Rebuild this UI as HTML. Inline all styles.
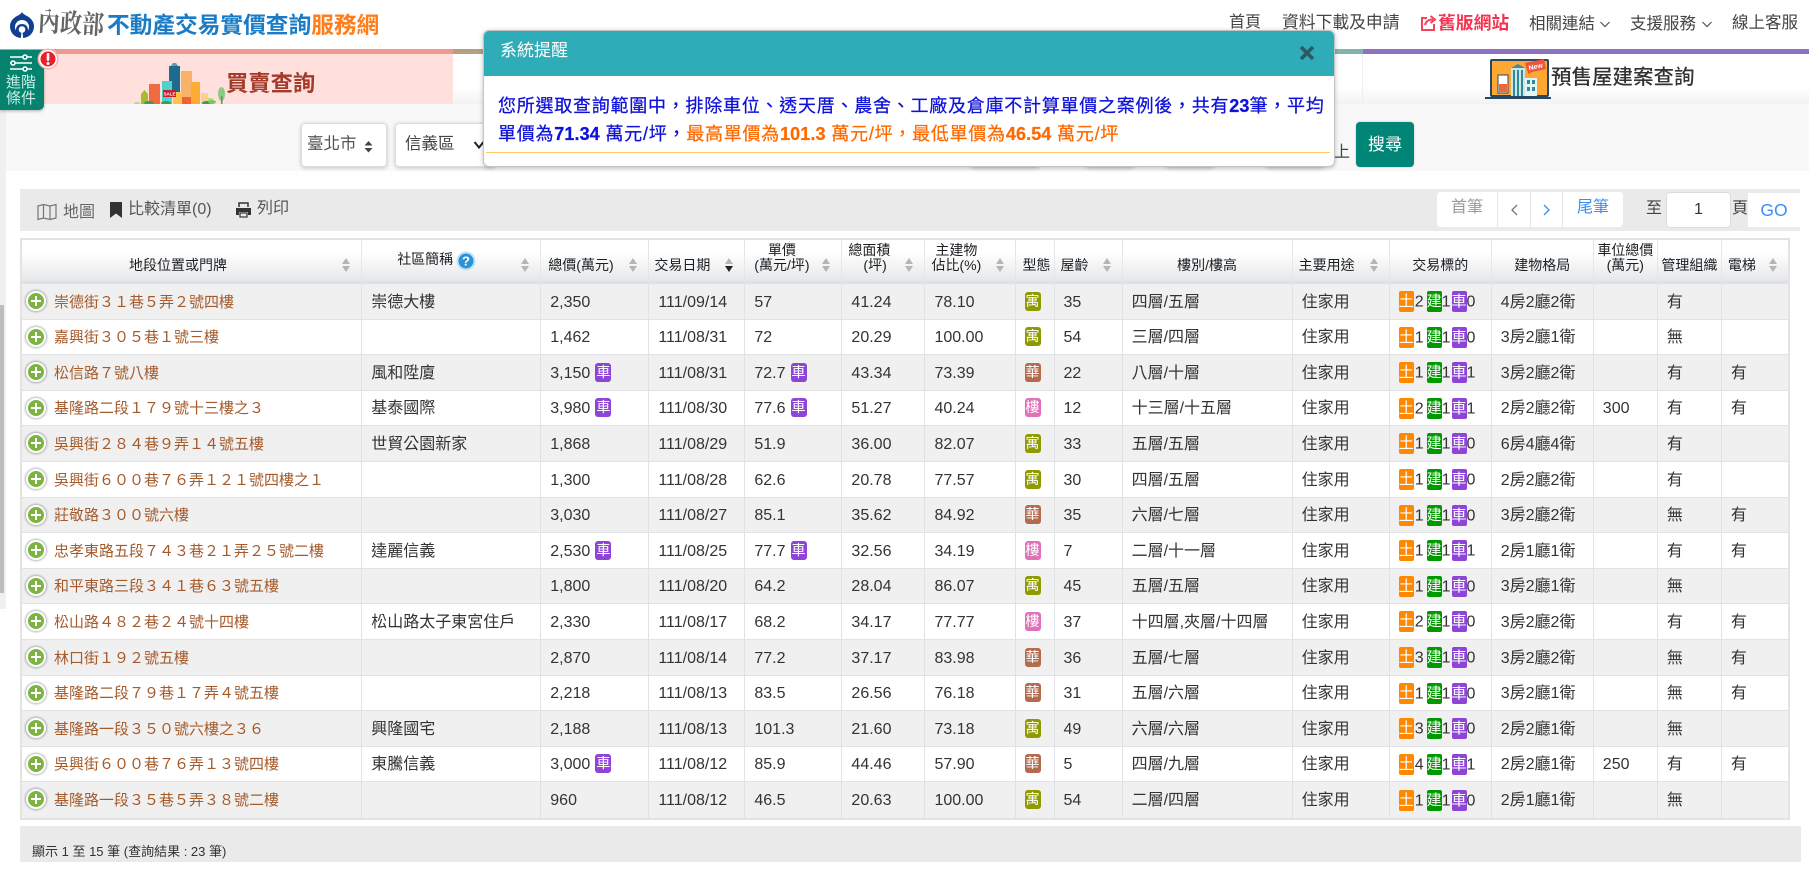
<!DOCTYPE html>
<html lang="zh-Hant">
<head>
<meta charset="utf-8">
<title>不動產交易實價查詢服務網</title>
<style>
html,body{margin:0;padding:0;width:1809px;height:872px;overflow:hidden;background:#fff}
body{position:relative;font-family:"Liberation Sans","Noto Sans CJK TC",sans-serif;font-size:16px;color:#333}
.a{position:absolute;white-space:nowrap}
.box{position:absolute;background:#fff;border:1px solid #ddd;border-radius:4px;box-shadow:0 1px 4px rgba(0,0,0,.22);box-sizing:border-box}
table{position:absolute;left:20px;top:238px;width:1770px;table-layout:fixed;border-collapse:separate;border-spacing:0;border:2px solid #e3e3e3;box-sizing:border-box;background:#fff}
thead tr{height:44px}
th{height:44px;padding:0 0 8px 0;border-right:1px solid #e4e6ea;border-bottom:3px solid #dee2e6;background:linear-gradient(#fff 30%,#e6e7e9);font-weight:normal;font-size:14px;line-height:15px;color:#1c1f22;vertical-align:bottom;position:relative;white-space:nowrap;box-sizing:border-box;text-align:left}
th:last-child,td:last-child{border-right:0}
td{padding:2px 0 0 9px;border-right:1px solid #e0e2e6;border-bottom:1px solid #e0e2e6;font-size:16px;color:#333;white-space:nowrap;overflow:hidden;position:relative;box-sizing:border-box;line-height:18px}
tr:last-child td{border-bottom:0}
tr.o td{background:#f0f0f0}
td.ad{padding-left:32px;font-size:15px;color:#a55a2b}
.p{position:absolute;left:4px;top:7px;width:16px;height:16px;border-radius:50%;background:#7cb342;border:2px solid #fff;box-shadow:0 0 2px 1px rgba(0,0,0,.3)}
.p:before{content:"";position:absolute;left:3px;top:7px;width:10px;height:2px;background:#fff}
.p:after{content:"";position:absolute;left:7px;top:3px;width:2px;height:10px;background:#fff}
.c{display:inline-block;width:16px;height:19px;line-height:19px;text-align:center;color:#fff;font-style:normal;font-size:14px;border-radius:3px;background:#8e44d6;margin-left:5px;vertical-align:top;margin-top:-2px}
.k{display:inline-block;width:16px;height:19px;line-height:19px;text-align:center;color:#fff;font-style:normal;font-size:14px;border-radius:3px;vertical-align:top;margin-top:-2px}
.y{background:#8f9a00}.h{background:#b36b4e}.l{background:#e070b8}
.t{display:inline-block;width:15px;height:21px;line-height:21px;text-align:center;color:#fff;font-style:normal;font-size:15px;border-radius:2px;vertical-align:middle;position:relative;top:-1px}
.to{background:#ff8800;margin-right:1px}.tg{background:#009900;margin-left:3px}.tv{background:#8e44d6;margin-left:1px}
.s{position:absolute;right:10px;top:18px;width:9px;height:15px}
.s:before{content:"";position:absolute;left:0;top:0;border:4.5px solid transparent;border-top:0;border-bottom:6px solid #b5b5b5}
.s:after{content:"";position:absolute;left:0;top:8px;border:4.5px solid transparent;border-bottom:0;border-top:6px solid #b5b5b5}
.s.d:after{border-top-color:#222}
.m{font-size:18px;line-height:28px;letter-spacing:.75px;color:#0f12d8;-webkit-text-stroke:.25px currentColor}
.m b{letter-spacing:.1px}
</style>
</head>
<body>

<!-- left strips -->
<div class="a" style="left:0;top:104px;width:6px;height:505px;background:#f0f0f0"></div>
<div class="a" style="left:0;top:305px;width:4px;height:288px;background:#bcbcbc"></div>

<!-- logo -->
<svg class="a" style="left:10px;top:12px" width="24" height="26" viewBox="0 0 24 26">
<path d="M12 0C13 2 15 3 17 4C21 6 24 10 24 14C24 21 19 26 12 26C5 26 0 21 0 14C0 10 3 6 7 4C9 3 11 2 12 0Z" fill="#123f92"/>
<circle cx="12" cy="15" r="7" fill="#fff"/>
<path d="M6.500 22C5 18 6 12 12 12C18 12 19 18 17.500 22C16 25 14.500 25.500 14 25.800H10C9.500 25.500 8 25 6.500 22Z" fill="#123f92"/>
<circle cx="12" cy="17.500" r="3.300" fill="#fff"/>
<path d="M10.800 26L11.500 20H12.500L13.200 26Z" fill="#fff"/>
</svg>
<div class="a" style="left:38px;top:9px;font-family:'Liberation Serif','Noto Serif CJK SC',serif;font-size:22px;line-height:30px;font-weight:bold;color:#666;transform:rotate(3deg) scaleY(1.2)">內政部</div>
<div class="a" style="left:107px;top:10px;font-size:22.700px;line-height:30px;font-weight:bold;color:#1a7cc6">不動產交易實價查詢<span style="color:#ff7d1a">服務網</span></div>

<!-- nav -->
<div class="a" style="left:1229px;top:12px;line-height:22px;color:#444">首頁</div>
<div class="a" style="left:1282px;top:12px;line-height:22px;color:#444;font-size:16.800px">資料下載及申請</div>
<svg class="a" style="left:1420px;top:14px" width="17" height="18" viewBox="0 0 17 18" fill="none" stroke="#f5455c" stroke-width="2"><path d="M7 4H2V16H14V10"/><path d="M5 11C6 7 9 5.500 13 5.500M10.500 2L15 5.500L10.500 9" /></svg>
<div class="a" style="left:1438px;top:12px;line-height:22px;color:#f5334f;font-weight:bold;font-size:17.800px">舊版網站</div>
<div class="a" style="left:1529px;top:13px;line-height:22px;color:#444;font-size:16.500px">相關連結</div>
<svg class="a" style="left:1600px;top:21px" width="10" height="7" fill="none" stroke="#555" stroke-width="1.200"><path d="M.5 1L5 5.500L9.500 1"/></svg>
<div class="a" style="left:1630px;top:13px;line-height:22px;color:#444;font-size:16.500px">支援服務</div>
<svg class="a" style="left:1702px;top:21px" width="10" height="7" fill="none" stroke="#555" stroke-width="1.200"><path d="M.5 1L5 5.500L9.500 1"/></svg>
<div class="a" style="left:1732px;top:12px;line-height:22px;color:#444;font-size:16.500px">線上客服</div>

<!-- tab bars -->
<div class="a" style="left:0;top:54px;width:1809px;height:50px;background:linear-gradient(#fff 65%,#f3f3f3)"></div>
<div class="a" style="left:0;top:49px;width:453px;height:5px;background:#ef9a8f"></div>
<div class="a" style="left:453px;top:49px;width:500px;height:5px;background:#b59f7e"></div>
<div class="a" style="left:953px;top:49px;width:410px;height:5px;background:#7fb5ae"></div>
<div class="a" style="left:1363px;top:49px;width:446px;height:5px;background:#8e72c0"></div>
<div class="a" style="left:0;top:54px;width:453px;height:50px;background:#ffe0dc"></div>
<div class="a" style="left:1362px;top:54px;width:1px;height:50px;background:#eeeeee"></div>

<!-- city illustration -->
<svg class="a" style="left:130px;top:55px" width="100" height="50" viewBox="130 55 100 50">
<rect x="169" y="66" width="11" height="26" fill="#1f6b8e"/><path d="M171 66L173 63H176L178 66Z" fill="#5b9ab5"/>
<rect x="181" y="71" width="11" height="33" fill="#f8b26a"/><rect x="181" y="97" width="11" height="7" fill="#f0642c"/>
<rect x="191" y="82" width="9" height="22" fill="#ffab33"/>
<rect x="149" y="84" width="11" height="20" fill="#ef6c3e"/>
<rect x="162" y="81" width="10" height="23" fill="#4fd1cf"/>
<rect x="173" y="92" width="9" height="12" fill="#ffc24d"/>
<path d="M141 94L144.500 90L148 94V104H141Z" fill="#a8ba2f"/>
<rect x="201" y="93" width="7" height="11" fill="#f8d28c"/>
<rect x="208" y="98" width="5" height="6" fill="#b6dd7f"/>
<ellipse cx="221.500" cy="94" rx="3.500" ry="7" fill="#8acb8a"/><rect x="221" y="96" width="1.500" height="8" fill="#7a8a55"/>
<rect x="163" y="90" width="13" height="7" fill="#c6202f"/>
<text x="169.500" y="95.500" font-size="4.500" font-weight="bold" fill="#fff" text-anchor="middle" font-family="Liberation Sans">SALE</text>
<ellipse cx="149" cy="103" rx="5" ry="2" fill="#3f9b4d"/><ellipse cx="166" cy="103" rx="5" ry="2" fill="#3f9b4d"/><ellipse cx="207" cy="103" rx="5" ry="2" fill="#3f9b4d"/><ellipse cx="137" cy="103.500" rx="3" ry="1.500" fill="#b6dd7f"/><ellipse cx="212" cy="102" rx="4" ry="2" fill="#7cc36a"/>
</svg>
<div class="a" style="left:226px;top:68px;font-size:22.300px;line-height:32px;font-weight:700;color:#a33a2a">買賣查詢</div>

<!-- presale tab -->
<svg class="a" style="left:1480px;top:55px" width="80" height="50" viewBox="1480 55 80 50">
<rect x="1491" y="60" width="57" height="36" rx="1" fill="#ffa733" stroke="#274862" stroke-width="2"/>
<rect x="1485" y="97" width="66" height="2" fill="#274862"/>
<rect x="1498" y="75" width="10" height="18" fill="#fff" stroke="#274862"/><rect x="1499" y="84" width="8" height="8" fill="#f0653a"/>
<rect x="1511" y="68" width="14" height="28" fill="#cfe6e8"/><path d="M1511 68L1518 64L1525 68Z" fill="#3e8b99"/>
<g fill="#2f8a9a"><rect x="1513" y="70" width="2" height="26"/><rect x="1517" y="70" width="2" height="26"/><rect x="1521" y="70" width="2" height="26"/></g>
<rect x="1525" y="78" width="12" height="18" fill="#e8f3f3"/><g fill="#2f8a9a"><rect x="1527" y="80" width="3" height="4"/><rect x="1532" y="80" width="3" height="4"/><rect x="1527" y="87" width="3" height="4"/><rect x="1532" y="87" width="3" height="4"/></g>
<path d="M1525 63L1544 59L1546 69L1532 72L1529 74L1528 73Z" fill="#ef5338"/>
<text x="1535.500" y="69" font-size="7" font-weight="bold" fill="#fff" text-anchor="middle" font-family="Liberation Sans" transform="rotate(-12 1535 66)">New</text>
</svg>
<div class="a" style="left:1551px;top:63px;font-size:20.500px;line-height:30px;font-weight:500;color:#333">預售屋建案查詢</div>

<!-- search band -->
<div class="a" style="left:6px;top:104px;width:1803px;height:67px;background:#f8f8f8"></div>
<div class="box" style="left:301px;top:123px;width:86px;height:44px"></div>
<div class="a" style="left:307px;top:134px;font-size:16.500px;line-height:20px;color:#555">臺北市</div>
<svg class="a" style="left:364px;top:139px" width="9" height="15"><path d="M4.500 2L8.500 6.500H.5ZM4.500 13.500L.5 9H8.500Z" fill="#444"/></svg>
<div class="box" style="left:395px;top:123px;width:100px;height:44px"></div>
<div class="a" style="left:405px;top:134px;font-size:16.500px;line-height:20px;color:#444">信義區</div>
<svg class="a" style="left:473px;top:140px" width="12" height="10" fill="none" stroke="#222" stroke-width="2"><path d="M1.500 2L6 7.500L10.500 2"/></svg>
<div class="box" style="left:970px;top:123px;width:70px;height:44px"></div>
<div class="box" style="left:1085px;top:123px;width:50px;height:44px"></div>
<div class="box" style="left:1165px;top:123px;width:50px;height:44px"></div>
<div class="box" style="left:1265px;top:123px;width:60px;height:44px"></div>
<div class="a" style="left:1334px;top:143px;font-size:16px;line-height:20px;color:#444">上</div>
<div class="a" style="left:1356px;top:122px;width:58px;height:45px;background:#008577;border-radius:4px;color:#fff;text-align:center;line-height:45px;font-size:17px;box-shadow:0 0 2px rgba(0,0,0,.2)">搜尋</div>

<!-- toolbar -->
<div class="a" style="left:20px;top:189px;width:1780px;height:42px;background:#eaeaea"></div>
<svg class="a" style="left:37px;top:203px" width="20" height="18" viewBox="0 0 20 18" fill="none" stroke="#777" stroke-width="1.200"><path d="M1 3L6.500 1.500L13 3L19 1.500V15L13 16.500L6.500 15L1 16.500Z"/><path d="M6.500 1.500V15M13 3V16.500"/></svg>
<div class="a" style="left:63px;top:202px;line-height:22px;color:#666">地圖</div>
<svg class="a" style="left:110px;top:202px" width="12" height="16"><path d="M0 0H12V16L6 11.500L0 16Z" fill="#333"/></svg>
<div class="a" style="left:128px;top:199px;line-height:22px;color:#555">比較清單(0)</div>
<svg class="a" style="left:235px;top:202px" width="17" height="16" viewBox="0 0 17 16"><path d="M4 5V1H13V5" fill="none" stroke="#333" stroke-width="1.500"/><path d="M1 6H16V13H13V10H4V13H1Z" fill="#333"/><rect x="5" y="11" width="7" height="4" fill="none" stroke="#333" stroke-width="1.200"/></svg>
<div class="a" style="left:257px;top:198px;line-height:22px;color:#555">列印</div>

<!-- pagination -->
<div class="a" style="left:1437px;top:192px;width:186px;height:35px;background:#fff;border-radius:4px"></div>
<div class="a" style="left:1497px;top:192px;width:1px;height:35px;background:#e6e6e6"></div>
<div class="a" style="left:1530px;top:192px;width:1px;height:35px;background:#e6e6e6"></div>
<div class="a" style="left:1562px;top:192px;width:1px;height:35px;background:#e6e6e6"></div>
<div class="a" style="left:1451px;top:197px;line-height:22px;color:#999">首筆</div>
<svg class="a" style="left:1511px;top:204px" width="7" height="12" fill="none" stroke="#777" stroke-width="1.300"><path d="M6 1L1 6L6 11"/></svg>
<svg class="a" style="left:1543px;top:204px" width="7" height="12" fill="none" stroke="#3a8df5" stroke-width="1.300"><path d="M1 1L6 6L1 11"/></svg>
<div class="a" style="left:1577px;top:197px;line-height:22px;color:#3a8df5">尾筆</div>
<div class="a" style="left:1646px;top:198px;line-height:22px;color:#444">至</div>
<div class="a" style="left:1666px;top:192px;width:65px;height:36px;background:#fff;border:1px solid #d8dde2;border-radius:4px;box-sizing:border-box;text-align:center;line-height:34px;color:#333">1</div>
<div class="a" style="left:1732px;top:198px;line-height:22px;color:#444">頁</div>
<div class="a" style="left:1748px;top:193px;width:52px;height:34px;background:#fff;text-align:center;line-height:34px;font-size:17.500px;color:#3a8df5">GO</div>

<!-- table -->
<table>
<colgroup><col style="width:340px"><col style="width:179px"><col style="width:108px"><col style="width:96px"><col style="width:97px"><col style="width:83px"><col style="width:90px"><col style="width:39px"><col style="width:68px"><col style="width:170px"><col style="width:97px"><col style="width:102px"><col style="width:102px"><col style="width:64px"><col style="width:64px"><col style="width:66px"></colgroup>
<thead><tr>
<th style="padding-left:107px">地段位置或門牌<span class="s"></span></th>
<th style="padding-bottom:14px;padding-left:35px">社區簡稱<svg style="position:absolute;left:94px;top:11px" width="20" height="20"><circle cx="10" cy="10" r="9.500" fill="#bfe3f7"/><circle cx="10" cy="10" r="7.500" fill="#2a93d8"/><text x="10" y="14.500" font-size="13" font-weight="bold" fill="#fff" text-anchor="middle" font-family="Liberation Sans">?</text></svg><span class="s"></span></th>
<th style="padding-left:7px">總價(萬元)<span class="s"></span></th>
<th style="padding-left:5px">交易日期<span class="s d"></span></th>
<th style="padding-left:7px;text-align:center;padding-right:30px">單價<br>(萬元/坪)<span class="s"></span></th>
<th style="padding-left:6px">總面積<br><span style="padding-left:15px">(坪)</span><span class="s"></span></th>
<th style="padding-left:6px">&nbsp;主建物<br>佔比(%)<span class="s"></span></th>
<th style="padding-left:7px">型態</th>
<th style="padding-left:6px">屋齡<span class="s"></span></th>
<th style="text-align:center">樓別/樓高</th>
<th style="padding-left:6px">主要用途<span class="s"></span></th>
<th style="text-align:center">交易標的</th>
<th style="text-align:center">建物格局</th>
<th style="text-align:center">車位總價<br>(萬元)</th>
<th style="text-align:center">管理組織</th>
<th style="padding-left:6px">電梯<span class="s"></span></th>
</tr></thead>
<tbody>
<tr class="o" style="height:36px"><td class="ad"><span class="p"></span>崇德街３１巷５弄２號四樓</td><td>崇德大樓</td><td>2,350</td><td>111/09/14</td><td>57</td><td>41.24</td><td>78.10</td><td><i class="k y">寓</i></td><td>35</td><td>四層/五層</td><td>住家用</td><td><i class="t to">土</i>2<i class="t tg">建</i>1<i class="t tv">車</i>0</td><td>4房2廳2衛</td><td></td><td>有</td><td></td></tr>
<tr style="height:35px"><td class="ad"><span class="p"></span>嘉興街３０５巷１號三樓</td><td></td><td>1,462</td><td>111/08/31</td><td>72</td><td>20.29</td><td>100.00</td><td><i class="k y">寓</i></td><td>54</td><td>三層/四層</td><td>住家用</td><td><i class="t to">土</i>1<i class="t tg">建</i>1<i class="t tv">車</i>0</td><td>3房2廳1衛</td><td></td><td>無</td><td></td></tr>
<tr class="o" style="height:36px"><td class="ad"><span class="p"></span>松信路７號八樓</td><td>風和陞廈</td><td>3,150<i class="c">車</i></td><td>111/08/31</td><td>72.7<i class="c">車</i></td><td>43.34</td><td>73.39</td><td><i class="k h">華</i></td><td>22</td><td>八層/十層</td><td>住家用</td><td><i class="t to">土</i>1<i class="t tg">建</i>1<i class="t tv">車</i>1</td><td>3房2廳2衛</td><td></td><td>有</td><td>有</td></tr>
<tr style="height:35px"><td class="ad"><span class="p"></span>基隆路二段１７９號十三樓之３</td><td>基泰國際</td><td>3,980<i class="c">車</i></td><td>111/08/30</td><td>77.6<i class="c">車</i></td><td>51.27</td><td>40.24</td><td><i class="k l">樓</i></td><td>12</td><td>十三層/十五層</td><td>住家用</td><td><i class="t to">土</i>2<i class="t tg">建</i>1<i class="t tv">車</i>1</td><td>2房2廳2衛</td><td>300</td><td>有</td><td>有</td></tr>
<tr class="o" style="height:36px"><td class="ad"><span class="p"></span>吳興街２８４巷９弄１４號五樓</td><td>世貿公園新家</td><td>1,868</td><td>111/08/29</td><td>51.9</td><td>36.00</td><td>82.07</td><td><i class="k y">寓</i></td><td>33</td><td>五層/五層</td><td>住家用</td><td><i class="t to">土</i>1<i class="t tg">建</i>1<i class="t tv">車</i>0</td><td>6房4廳4衛</td><td></td><td>有</td><td></td></tr>
<tr style="height:36px"><td class="ad"><span class="p"></span>吳興街６００巷７６弄１２１號四樓之１</td><td></td><td>1,300</td><td>111/08/28</td><td>62.6</td><td>20.78</td><td>77.57</td><td><i class="k y">寓</i></td><td>30</td><td>四層/五層</td><td>住家用</td><td><i class="t to">土</i>1<i class="t tg">建</i>1<i class="t tv">車</i>0</td><td>2房2廳2衛</td><td></td><td>有</td><td></td></tr>
<tr class="o" style="height:35px"><td class="ad"><span class="p"></span>莊敬路３００號六樓</td><td></td><td>3,030</td><td>111/08/27</td><td>85.1</td><td>35.62</td><td>84.92</td><td><i class="k h">華</i></td><td>35</td><td>六層/七層</td><td>住家用</td><td><i class="t to">土</i>1<i class="t tg">建</i>1<i class="t tv">車</i>0</td><td>3房2廳2衛</td><td></td><td>無</td><td>有</td></tr>
<tr style="height:36px"><td class="ad"><span class="p"></span>忠孝東路五段７４３巷２１弄２５號二樓</td><td>達麗信義</td><td>2,530<i class="c">車</i></td><td>111/08/25</td><td>77.7<i class="c">車</i></td><td>32.56</td><td>34.19</td><td><i class="k l">樓</i></td><td>7</td><td>二層/十一層</td><td>住家用</td><td><i class="t to">土</i>1<i class="t tg">建</i>1<i class="t tv">車</i>1</td><td>2房1廳1衛</td><td></td><td>有</td><td>有</td></tr>
<tr class="o" style="height:35px"><td class="ad"><span class="p"></span>和平東路三段３４１巷６３號五樓</td><td></td><td>1,800</td><td>111/08/20</td><td>64.2</td><td>28.04</td><td>86.07</td><td><i class="k y">寓</i></td><td>45</td><td>五層/五層</td><td>住家用</td><td><i class="t to">土</i>1<i class="t tg">建</i>1<i class="t tv">車</i>0</td><td>3房2廳1衛</td><td></td><td>無</td><td></td></tr>
<tr style="height:36px"><td class="ad"><span class="p"></span>松山路４８２巷２４號十四樓</td><td>松山路太子東宮住戶</td><td>2,330</td><td>111/08/17</td><td>68.2</td><td>34.17</td><td>77.77</td><td><i class="k l">樓</i></td><td>37</td><td>十四層,夾層/十四層</td><td>住家用</td><td><i class="t to">土</i>2<i class="t tg">建</i>1<i class="t tv">車</i>0</td><td>3房2廳2衛</td><td></td><td>有</td><td>有</td></tr>
<tr class="o" style="height:36px"><td class="ad"><span class="p"></span>林口街１９２號五樓</td><td></td><td>2,870</td><td>111/08/14</td><td>77.2</td><td>37.17</td><td>83.98</td><td><i class="k h">華</i></td><td>36</td><td>五層/七層</td><td>住家用</td><td><i class="t to">土</i>3<i class="t tg">建</i>1<i class="t tv">車</i>0</td><td>3房2廳2衛</td><td></td><td>無</td><td>有</td></tr>
<tr style="height:35px"><td class="ad"><span class="p"></span>基隆路二段７９巷１７弄４號五樓</td><td></td><td>2,218</td><td>111/08/13</td><td>83.5</td><td>26.56</td><td>76.18</td><td><i class="k h">華</i></td><td>31</td><td>五層/六層</td><td>住家用</td><td><i class="t to">土</i>1<i class="t tg">建</i>1<i class="t tv">車</i>0</td><td>3房2廳1衛</td><td></td><td>無</td><td>有</td></tr>
<tr class="o" style="height:36px"><td class="ad"><span class="p"></span>基隆路一段３５０號六樓之３６</td><td>興隆國宅</td><td>2,188</td><td>111/08/13</td><td>101.3</td><td>21.60</td><td>73.18</td><td><i class="k y">寓</i></td><td>49</td><td>六層/六層</td><td>住家用</td><td><i class="t to">土</i>3<i class="t tg">建</i>1<i class="t tv">車</i>0</td><td>2房2廳1衛</td><td></td><td>無</td><td></td></tr>
<tr style="height:35px"><td class="ad"><span class="p"></span>吳興街６００巷７６弄１３號四樓</td><td>東騰信義</td><td>3,000<i class="c">車</i></td><td>111/08/12</td><td>85.9</td><td>44.46</td><td>57.90</td><td><i class="k h">華</i></td><td>5</td><td>四層/九層</td><td>住家用</td><td><i class="t to">土</i>4<i class="t tg">建</i>1<i class="t tv">車</i>1</td><td>2房2廳1衛</td><td>250</td><td>有</td><td>有</td></tr>
<tr class="o" style="height:36px"><td class="ad"><span class="p"></span>基隆路一段３５巷５弄３８號二樓</td><td></td><td>960</td><td>111/08/12</td><td>46.5</td><td>20.63</td><td>100.00</td><td><i class="k y">寓</i></td><td>54</td><td>二層/四層</td><td>住家用</td><td><i class="t to">土</i>1<i class="t tg">建</i>1<i class="t tv">車</i>0</td><td>2房1廳1衛</td><td></td><td>無</td><td></td></tr>
</tbody>
</table>

<!-- footer bar -->
<div class="a" style="left:20px;top:826px;width:1781px;height:36px;background:#eaeaea"></div>
<div class="a" style="left:32px;top:843px;font-size:13px;line-height:18px;color:#333">顯示 1 至 15 筆 (查詢結果 : 23 筆)</div>

<!-- side button -->
<div class="a" style="left:0;top:50px;width:44px;height:60px;background:#05836f;border-radius:0 0 5px 0;box-shadow:0 1px 3px rgba(0,0,0,.3)"></div>
<svg class="a" style="left:8px;top:53px" width="26" height="20" fill="none" stroke="#fff" stroke-width="1.500"><path d="M2 4H24M2 10H24M2 16H24"/><circle cx="17" cy="4" r="2" fill="#05836f"/><circle cx="5" cy="10" r="2" fill="#05836f"/><circle cx="17" cy="16" r="2" fill="#05836f"/></svg>
<div class="a" style="left:6px;top:75px;width:30px;font-size:15px;line-height:16px;color:#c8efe6;white-space:normal">進階條件</div>
<svg class="a" style="left:37px;top:48px" width="22" height="22"><circle cx="11" cy="11" r="10.500" fill="#f6b3b3"/><circle cx="11" cy="11" r="9" fill="#fff"/><circle cx="11" cy="11" r="7.500" fill="#e8202a"/><rect x="9.700" y="5" width="2.600" height="8" rx="1.200" fill="#fff"/><circle cx="11" cy="15.500" r="1.500" fill="#fff"/></svg>

<!-- modal -->
<div class="a" style="left:483px;top:30px;width:852px;height:137px;background:#fff;border:1px solid #c4c4c4;border-radius:6px;box-sizing:border-box;box-shadow:0 1px 5px rgba(0,0,0,.25);overflow:hidden">
  <div style="position:absolute;left:0;top:0;width:850px;height:45px;background:#2eadb8"></div>
</div>
<div class="a" style="left:500px;top:39px;font-size:17px;line-height:24px;color:#fff">系統提醒</div>
<svg class="a" style="left:1299px;top:45px" width="16" height="16" fill="none" stroke="#2a5a66" stroke-width="3.600"><path d="M2 2L14 14M14 2L2 14"/></svg>
<div class="a m" style="left:498px;top:92px">您所選取查詢範圍中，排除車位、透天厝、農舍、工廠及倉庫不計算單價之案例後，共有<b>23</b>筆，平均</div>
<div class="a m" style="left:498px;top:120px">單價為<b>71.34</b> 萬元/坪，<span style="color:#ff6a00">最高單價為<b>101.3</b> 萬元/坪，最低單價為<b>46.54</b> 萬元/坪</span></div>
<div class="a" style="left:486px;top:152px;width:844px;height:1px;background:#ffc966"></div>

</body>
</html>
